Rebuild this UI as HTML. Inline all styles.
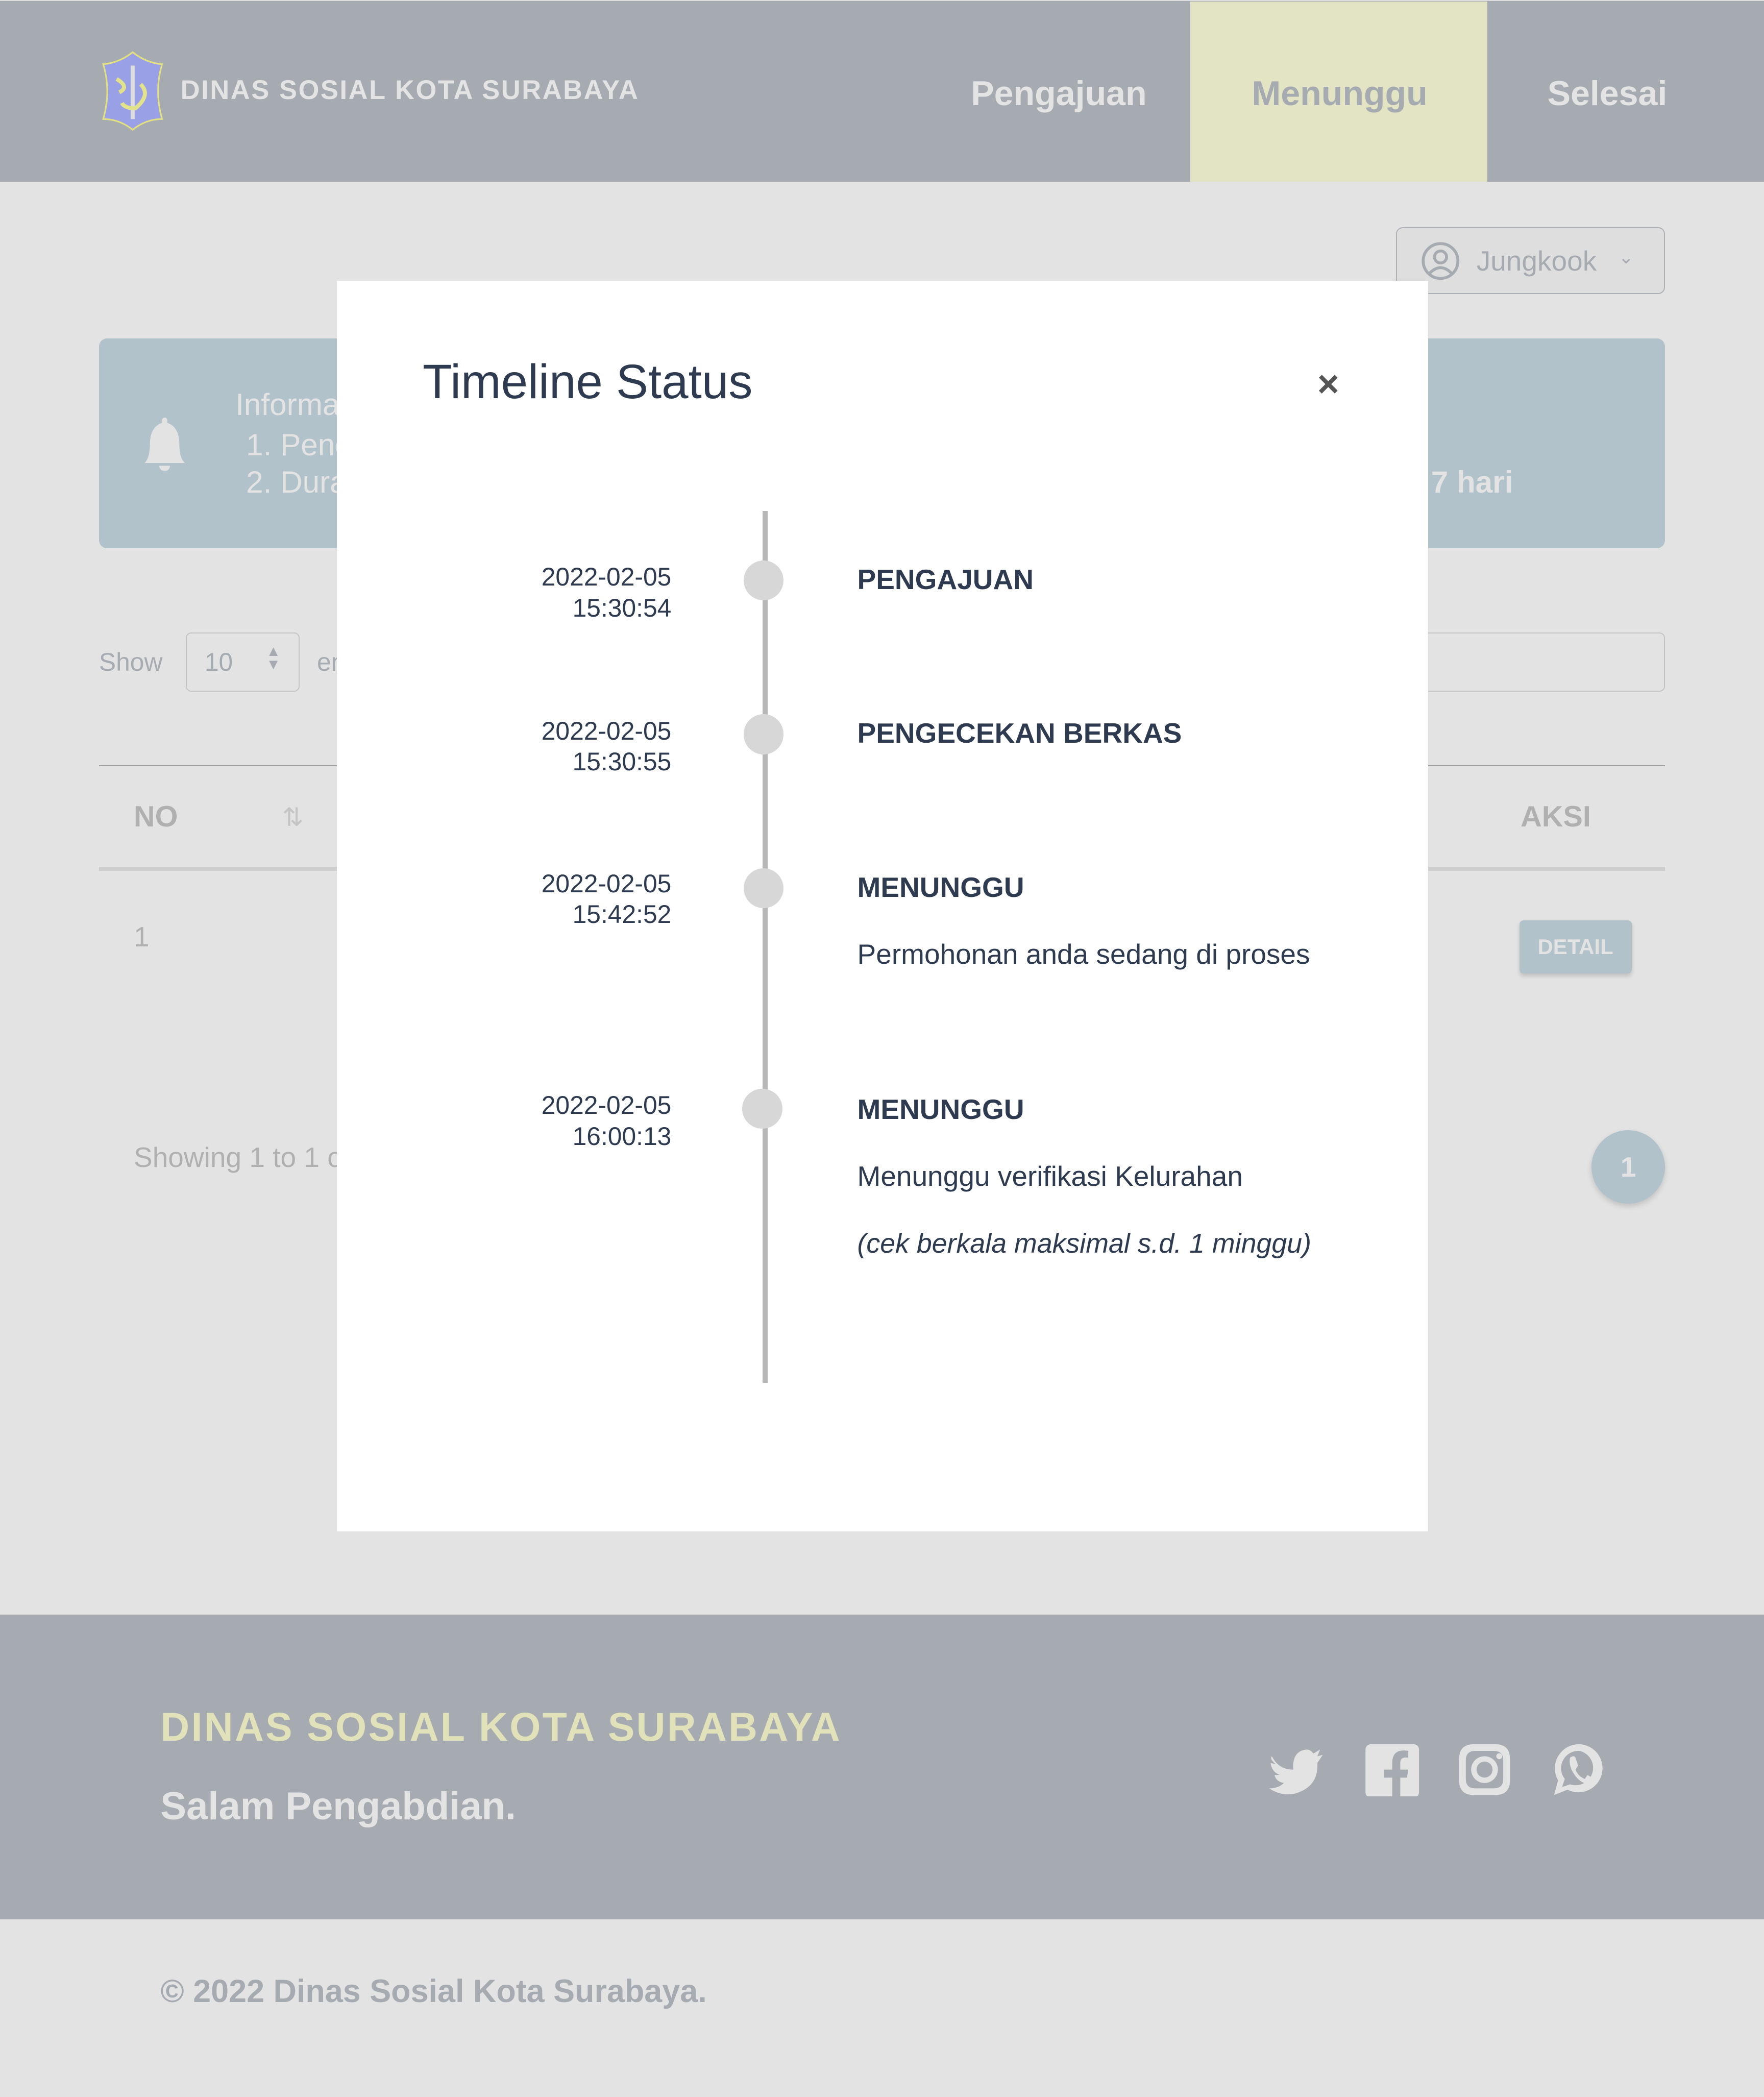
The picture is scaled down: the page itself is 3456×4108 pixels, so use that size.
<!DOCTYPE html>
<html><head><meta charset="utf-8"><style>
*{margin:0;padding:0;box-sizing:border-box}
html,body{width:3456px;height:4108px;overflow:hidden;background:#e3e3e3}
#z{zoom:2.6202;width:1319px;height:1568px;position:relative;font-family:"Liberation Sans",sans-serif}
.a{position:absolute;white-space:nowrap}
</style></head><body><div id="z">
<div class="a" style="left:0;top:0;width:1319px;height:136px;background:#a6abb2;border-top:1px solid #ddd"></div>
<svg class="a" style="left:75px;top:37px" width="48" height="62" viewBox="0 0 48 62"><path d="M24 2 Q34 10 46 11 Q40 31 46 52 Q34 52 24 60 Q14 52 2 52 Q8 31 2 11 Q14 10 24 2Z" fill="#9aa0e6" stroke="#e3e080" stroke-width="1.2"/><rect x="22.5" y="12" width="3" height="40" fill="#ddd"/><path d="M12 22 Q22 28 14 32 M30 26 Q38 34 26 44 Q18 44 16 40" stroke="#e1e28a" stroke-width="3" fill="none"/></svg>
<div class="a" style="left:135px;top:56px;font-size:20px;font-weight:bold;color:#e3e3e3;letter-spacing:1.0px">DINAS SOSIAL KOTA SURABAYA</div>
<div class="a" style="left:726px;top:55px;font-size:26px;font-weight:bold;color:#e3e3e3">Pengajuan</div>
<div class="a" style="left:890px;top:1px;width:222px;height:135px;background:#e3e4c4"></div>
<div class="a" style="left:936px;top:55px;font-size:26px;font-weight:bold;color:#a6abb2">Menunggu</div>
<div class="a" style="left:1157px;top:55px;font-size:26px;font-weight:bold;color:#e3e3e3">Selesai</div>
<div class="a" style="left:1044px;top:170px;width:201px;height:50px;border:1px solid #aeb1b6;border-radius:5px;background:#dedede"></div>
<svg class="a" style="left:1062px;top:180px" width="30" height="30" viewBox="0 0 30 30" fill="none" stroke="#a6abb2" stroke-width="2.2"><circle cx="15" cy="15" r="13"/><circle cx="15" cy="12" r="4.5"/><path d="M7 24 Q15 16 23 24"/></svg>
<div class="a" style="left:1104px;top:183px;font-size:21px;color:#a6abb2">Jungkook</div>
<div class="a" style="left:1210px;top:184px;font-size:14px;color:#a6abb2">&#8964;</div>
<div class="a" style="left:74px;top:253px;width:1171px;height:157px;background:#b1c2ca;border-radius:6px"></div>
<svg class="a" style="left:106px;top:312px" width="34" height="40" viewBox="0 0 34 40" fill="#e3e3e3"><path d="M17 0 a2 2 0 0 1 2 2 v2 Q28 7 28 20 Q28 30 32 34 H2 Q6 30 6 20 Q6 7 15 4 V2 a2 2 0 0 1 2-2Z"/><path d="M13 36 h8 a4 4 0 0 1-8 0Z"/></svg>
<div class="a" style="left:176px;top:289px;font-size:23px;color:#e3e3e3">Informasi</div>
<div class="a" style="left:184px;top:319px;font-size:23px;color:#e3e3e3">1. Pengajuan</div>
<div class="a" style="left:184px;top:347px;font-size:23px;color:#e3e3e3">2. Durasi</div>
<div class="a" style="left:1070px;top:347px;font-size:23px;color:#e3e3e3;font-weight:bold">7 hari</div>
<div class="a" style="left:74px;top:484px;font-size:19px;color:#a6abb2">Show</div>
<div class="a" style="left:139px;top:473px;width:85px;height:44px;border:1px solid #c4c4c4;border-radius:4px"></div>
<div class="a" style="left:153px;top:484px;font-size:19px;color:#a6abb2">10</div>
<div class="a" style="left:199px;top:482px;font-size:11px;line-height:10px;color:#a6abb2">▲<br>▼</div>
<div class="a" style="left:237px;top:484px;font-size:19px;color:#a6abb2">entries</div>
<div class="a" style="left:1000px;top:473px;width:245px;height:44px;border:1px solid #c4c4c4;border-radius:4px"></div>
<div class="a" style="left:74px;top:572px;width:1171px;height:1px;background:#a0a0a0"></div>
<div class="a" style="left:100px;top:598px;font-size:22px;font-weight:bold;color:#b0b0b0">NO</div>
<div class="a" style="left:211px;top:600px;font-size:19px;color:#c4c4c4">⇅</div>
<div class="a" style="left:1137px;top:598px;font-size:22px;font-weight:bold;color:#b0b0b0">AKSI</div>
<div class="a" style="left:74px;top:648px;width:1171px;height:3px;background:#cfcfcf"></div>
<div class="a" style="left:100px;top:688px;font-size:21px;color:#b0b0b0">1</div>
<div class="a" style="left:1136px;top:688px;width:84px;height:40px;background:#b1c2ca;border-radius:3px;box-shadow:0 2px 3px rgba(0,0,0,.15);color:#e3e3e3;font-size:16px;font-weight:bold;text-align:center;line-height:40px">DETAIL</div>
<div class="a" style="left:100px;top:853px;font-size:21px;color:#b0b0b0">Showing 1 to 1 of 1 entries</div>
<div class="a" style="left:1190px;top:845px;width:55px;height:55px;border-radius:50%;background:#b1c2ca;box-shadow:0 2px 4px rgba(0,0,0,.15);color:#e3e3e3;font-size:21px;font-weight:bold;text-align:center;line-height:55px">1</div>

<div class="a" style="left:252px;top:210px;width:816px;height:935px;background:#fff"></div>
<div class="a" style="left:316px;top:265px;font-size:36px;color:#2d3a4f">Timeline Status</div>
<div class="a" style="left:985px;top:271px;font-size:28px;font-weight:bold;color:#555">×</div>
<div class="a" style="left:570px;top:382px;width:4px;height:652px;background:#b7b7b7"></div>
<div class="a" style="left:556px;top:419px;width:30px;height:30px;border-radius:50%;background:#d7d7d7"></div>
<div class="a" style="left:556px;top:534px;width:30px;height:30px;border-radius:50%;background:#d7d7d7"></div>
<div class="a" style="left:556px;top:649px;width:30px;height:30px;border-radius:50%;background:#d7d7d7"></div>
<div class="a" style="left:555px;top:814px;width:30px;height:30px;border-radius:50%;background:#d7d7d7"></div>
<div class="a" style="left:360px;top:420px;width:142px;text-align:right;font-size:19px;line-height:23px;color:#2d3a4f">2022-02-05<br>15:30:54</div>
<div class="a" style="left:360px;top:535px;width:142px;text-align:right;font-size:19px;line-height:23px;color:#2d3a4f">2022-02-05<br>15:30:55</div>
<div class="a" style="left:360px;top:649px;width:142px;text-align:right;font-size:19px;line-height:23px;color:#2d3a4f">2022-02-05<br>15:42:52</div>
<div class="a" style="left:360px;top:815px;width:142px;text-align:right;font-size:19px;line-height:23px;color:#2d3a4f">2022-02-05<br>16:00:13</div>
<div class="a" style="left:641px;top:421px;font-size:21px;font-weight:bold;color:#2d3a4f">PENGAJUAN</div>
<div class="a" style="left:641px;top:536px;font-size:21px;font-weight:bold;color:#2d3a4f">PENGECEKAN BERKAS</div>
<div class="a" style="left:641px;top:651px;font-size:21px;font-weight:bold;color:#2d3a4f">MENUNGGU</div>
<div class="a" style="left:641px;top:701px;font-size:21px;color:#2d3a4f">Permohonan anda sedang di proses</div>
<div class="a" style="left:641px;top:817px;font-size:21px;font-weight:bold;color:#2d3a4f">MENUNGGU</div>
<div class="a" style="left:641px;top:867px;font-size:21px;color:#2d3a4f">Menunggu verifikasi Kelurahan</div>
<div class="a" style="left:641px;top:918px;font-size:20.5px;font-style:italic;color:#2d3a4f">(cek berkala maksimal s.d. 1 minggu)</div>

<div class="a" style="left:0;top:1207px;width:1319px;height:228px;background:#a6abb2"></div>
<div class="a" style="left:120px;top:1274px;font-size:30px;font-weight:bold;color:#e1e2b9;letter-spacing:1.3px">DINAS SOSIAL KOTA SURABAYA</div>
<div class="a" style="left:120px;top:1334px;font-size:29px;font-weight:bold;color:#e3e3e3">Salam Pengabdian.</div>
<svg class="a" style="left:948px;top:1301px" width="256" height="42" viewBox="0 0 256 42" fill="#e3e3e3">
<path d="M3 12 Q8 22 19 22 Q18 8 29 7 Q32 7 34 10 L39 7 L37 12 L41 11 L37 17 Q38 35 20 40 Q10 42 1 36 Q8 36 12 32 Q6 31 5 26 L9 26 Q3 24 2 17 L6 18 Q1 14 3 12Z"/>
<path d="M77 3 h32 a4 4 0 0 1 4 4 v32 a4 4 0 0 1-4 4 h-10 v-15 h5 l1-6 h-6 v-5 q0-4 4-4 h2 v-5 q-12-2-12 9 v5 h-6 v6 h6 v15 h-16 a4 4 0 0 1-4-4 v-32 a4 4 0 0 1 4-4Z"/>
<path fill-rule="evenodd" d="M154 3 h16 q11 0 11 11 v16 q0 11-11 11 h-16 q-11 0-11-11 v-16 q0-11 11-11Z M155 8 q-7 0-7 7 v14 q0 7 7 7 h14 q7 0 7-7 v-14 q0-7-7-7Z M162 12 a10 10 0 1 1 0 20 a10 10 0 1 1 0-20Z M162 16 a6 6 0 1 0 0 12 a6 6 0 1 0 0-12Z"/>
<circle cx="173" cy="12" r="2.2"/>
<path fill-rule="evenodd" d="M233 3 a18 18 0 1 1-9 34 l-10 4 l3-11 a18 18 0 0 1 16-27Z M233 8 a13 13 0 0 0-11 21 l-2 6 l6-2 a13 13 0 1 0 7-25Z"/>
<path d="M226 13 q3-2 4 0 l2 6 l-2 3 q2 5 7 7 l2-3 l5 3 q0 4-4 4 q-8-1-13-11 q-2-5-1-9Z"/>
</svg>
<div class="a" style="left:120px;top:1475px;font-size:24px;font-weight:bold;color:#a6abb2">© 2022 Dinas Sosial Kota Surabaya.</div>
</div></body></html>
